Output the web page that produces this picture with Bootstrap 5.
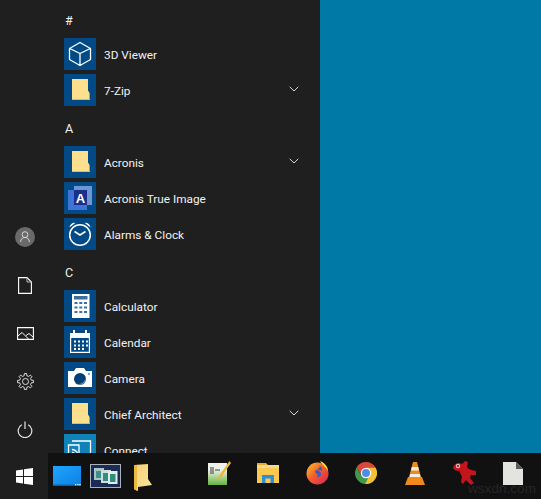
<!DOCTYPE html>
<html lang="en">
<head>
    <meta charset="UTF-8">
    <meta name="viewport" content="width=device-width, initial-scale=1.0">
    <title>Start Menu</title>
    <link href="https://cdn.jsdelivr.net/npm/bootstrap@5.3.0/dist/css/bootstrap.min.css" rel="stylesheet">
    <style>
        html, body { height: 100%; overflow: hidden; }
        body { background: #0179a6; color: #f2f2f2; font-family: Roboto, "Open Sans", sans-serif; font-size: 11.8px; line-height: 16px; }
        .screen { width: 541px; height: 499px; }
        .workspace { height: 453px; }
        .start-menu { width: 320px; background: #1f1f1f; }
        .side-rail { width: 48px; }
        .side-item { width: 48px; height: 48px; padding-left: 2px; }
        .app-list { width: 272px; padding-left: 16px; overflow: hidden; }
        .group-head { height: 36px; flex-shrink: 0; padding: 13px 0 0 1px; font-size: 12.5px; }
        .app-row { height: 36px; flex-shrink: 0; }
        .tile { width: 32px; height: 32px; background: #014a86; flex-shrink: 0; }
        .tile-light { background: #0f83b8; }
        .app-name { margin-left: 8px; padding-top: 2px; flex-grow: 1; }
        .chevron { margin-right: 21px; margin-top: -2px; }
        .taskbar { height: 46px; background: #111111; }
        .start-btn { width: 48px; height: 46px; background: #1f1f1f; }
        .slot-small { width: 38px; }
        .slot-low { padding-top: 3px; }
        .slot { width: 49px; padding-bottom: 6px; }
        .pinned { margin-left: 32.5px; }
        .watermark { position: absolute; left: 468px; top: 481px; color: #262626; font-family: "Liberation Sans", sans-serif; font-size: 13.6px; line-height: 16px; }
    </style>
</head>
<body>
    <svg width="0" height="0" class="position-absolute">
        <symbol id="folder" viewBox="0 0 32 32">
            <path d="M8 5H24V16.500L25.600 19V26H8Z" fill="#fde08e"/>
            <path d="M8 25H25.600V26H8Z" fill="#e3bb57"/>
        </symbol>
        <symbol id="chev" viewBox="0 0 10 6">
            <path d="M.7.8 5 5 9.300.8" fill="none" stroke="#d8d8d8" stroke-width="1"/>
        </symbol>
    </svg>

    <div class="screen d-flex flex-column position-relative">
        <div class="workspace d-flex">
            <div class="start-menu d-flex">
                <!-- left rail -->
                <div class="side-rail d-flex flex-column justify-content-end">
                    <div class="side-item d-flex align-items-center justify-content-center">
                        <svg width="20" height="20" viewBox="0 0 20 20">
                            <circle cx="10" cy="10" r="10" fill="#6a6a6a"/>
                            <circle cx="10" cy="7.600" r="2.900" fill="none" stroke="#d6d6d6" stroke-width="1"/>
                            <path d="M5.600 15c0-3 2-4.500 4.400-4.500s4.400 1.500 4.400 4.500" fill="none" stroke="#d6d6d6" stroke-width="1"/>
                        </svg>
                    </div>
                    <div class="side-item d-flex align-items-center justify-content-center">
                        <svg width="14" height="17" viewBox="0 0 14 17">
                            <path d="M.6.6H9L13.400 5V16.400H.6Z" fill="none" stroke="#fff" stroke-width="1.100"/>
                            <path d="M9 .6V5H13.400" fill="none" stroke="#bbb" stroke-width="1"/>
                        </svg>
                    </div>
                    <div class="side-item d-flex align-items-center justify-content-center">
                        <svg width="17" height="13" viewBox="0 0 17 13">
                            <path d="M.6.6H16.400V12.400H.6Z" fill="none" stroke="#fff" stroke-width="1.100"/>
                            <path d="M.8 9 5 5.500 11.500 12M9 8.500 12 6.500 16 10" fill="none" stroke="#fff" stroke-width="1"/>
                        </svg>
                    </div>
                    <div class="side-item d-flex align-items-center justify-content-center">
                        <svg width="17" height="17" viewBox="0 0 18 18">
                            <path d="M15.14 7.58 17.42 7.82V10.18L15.14 10.42 14.34 12.34 15.79 14.12 14.12 15.79 12.34 14.34 10.42 15.14 10.18 17.42H7.82L7.58 15.14 5.66 14.34 3.88 15.79 2.21 14.12 3.66 12.34 2.86 10.42 .58 10.18V7.82L2.86 7.58 3.66 5.66 2.21 3.88 3.88 2.21 5.66 3.66 7.58 2.86 7.82 .58H10.18L10.42 2.86 12.34 3.66 14.12 2.21 15.79 3.88 14.34 5.66Z" fill="none" stroke="#e6e6e6" stroke-width="1"/>
                            <circle cx="9" cy="9" r="3.200" fill="none" stroke="#e6e6e6" stroke-width="1"/>
                        </svg>
                    </div>
                    <div class="side-item d-flex align-items-center justify-content-center">
                        <svg width="16" height="17" viewBox="0 0 16 17">
                            <path d="M4.800 3.800A6.800 6.800 0 1 0 11.200 3.800" fill="none" stroke="#e6e6e6" stroke-width="1.200"/>
                            <path d="M8 .5V8" fill="none" stroke="#e6e6e6" stroke-width="1.200"/>
                        </svg>
                    </div>
                </div>

                <!-- all apps -->
                <div class="app-list d-flex flex-column">
                    <div class="group-head">#</div>
                    <div class="app-row d-flex align-items-center">
                        <div class="tile">
                            <svg width="32" height="32" viewBox="0 0 32 32">
                                <path d="M16 4.500 26.500 10.500V21.500L16 27.500 5.500 21.500V10.500ZM5.800 10.500 16 15.500 26.200 10.500M16 15.500V27.500" fill="none" stroke="#fff" stroke-width="1.300" stroke-linejoin="round"/>
                            </svg>
                        </div>
                        <span class="app-name">3D Viewer</span>
                    </div>
                    <div class="app-row d-flex align-items-center">
                        <div class="tile"><svg width="32" height="32"><use href="#folder"/></svg></div>
                        <span class="app-name">7-Zip</span>
                        <svg class="chevron" width="10" height="6"><use href="#chev"/></svg>
                    </div>

                    <div class="group-head">A</div>
                    <div class="app-row d-flex align-items-center">
                        <div class="tile"><svg width="32" height="32"><use href="#folder"/></svg></div>
                        <span class="app-name">Acronis</span>
                        <svg class="chevron" width="10" height="6"><use href="#chev"/></svg>
                    </div>
                    <div class="app-row d-flex align-items-center">
                        <div class="tile">
                            <svg width="32" height="32" viewBox="0 0 32 32">
                                <rect x="10" y="4" width="18" height="19" fill="#6c97d2"/>
                                <rect x="4" y="8" width="19" height="20" fill="#3f74d6"/>
                                <rect x="10" y="8" width="13" height="15" fill="#1b2f8c"/>
                                <text x="16.500" y="20.500" text-anchor="middle" fill="#fff" font-family="Liberation Sans, sans-serif" font-weight="700" font-size="13">A</text>
                            </svg>
                        </div>
                        <span class="app-name">Acronis True Image</span>
                    </div>
                    <div class="app-row d-flex align-items-center">
                        <div class="tile">
                            <svg width="32" height="32" viewBox="0 0 32 32">
                                <circle cx="16" cy="17" r="10.300" fill="none" stroke="#fff" stroke-width="1.500"/>
                                <path d="M5.500 9.500C6 6 8.500 4.500 11.500 4.800ZM26.500 9.500C26 6 23.500 4.500 20.500 4.800Z" fill="#fff"/>
                                <path d="M10.500 13.500 16 17 21.500 13.500" fill="none" stroke="#fff" stroke-width="1.500"/>
                            </svg>
                        </div>
                        <span class="app-name">Alarms &amp; Clock</span>
                    </div>

                    <div class="group-head">C</div>
                    <div class="app-row d-flex align-items-center">
                        <div class="tile">
                            <svg width="32" height="32" viewBox="0 0 32 32">
                                <rect x="8" y="4" width="17.500" height="24" fill="#fff"/>
                                <rect x="10" y="6" width="13.500" height="3.500" fill="#3e6f9f"/>
                                <path d="M10.500 12h3v2h-3zM15.300 12h3v2h-3zM20 12h3v2h-3zM10.500 16.500h3v2h-3zM15.300 16.500h3v2h-3zM20 16.500h3v2h-3zM10.500 21h3v2h-3zM15.300 21h3v2h-3zM20 21h3v2h-3z" fill="#3e6f9f"/>
                            </svg>
                        </div>
                        <span class="app-name">Calculator</span>
                    </div>
                    <div class="app-row d-flex align-items-center">
                        <div class="tile">
                            <svg width="32" height="32" viewBox="0 0 32 32">
                                <path d="M6 7H9V4H11V7H21V4H23V7H26V12H6Z" fill="#fff"/>
                                <path d="M6.600 10V26.400H25.400V10" fill="none" stroke="#fff" stroke-width="1.200"/>
                                <path d="M10 14.500h2v2h-2zM14 14.500h2v2h-2zM18 14.500h2v2h-2zM22 14.500h2v2h-2zM10 18.500h2v2h-2zM14 18.500h2v2h-2zM18 18.500h2v2h-2zM22 18.500h2v2h-2zM10 22h2v2h-2zM14 22h2v2h-2zM18 22h2v2h-2z" fill="#fff"/>
                            </svg>
                        </div>
                        <span class="app-name">Calendar</span>
                    </div>
                    <div class="app-row d-flex align-items-center">
                        <div class="tile">
                            <svg width="32" height="32" viewBox="0 0 32 32">
                                <path d="M4 9H10L12 6H20L22 9H28V25H4Z" fill="#fff"/>
                                <circle cx="16" cy="17" r="6" fill="#013f75"/>
                                <path d="M21.500 15A6 6 0 0 1 12 21.500 7 7 0 0 0 21.500 15Z" fill="#6f8fb0"/>
                                <circle cx="25" cy="12" r=".8" fill="#013f75"/>
                            </svg>
                        </div>
                        <span class="app-name">Camera</span>
                    </div>
                    <div class="app-row d-flex align-items-center">
                        <div class="tile"><svg width="32" height="32"><use href="#folder"/></svg></div>
                        <span class="app-name">Chief Architect</span>
                        <svg class="chevron" width="10" height="6"><use href="#chev"/></svg>
                    </div>
                    <div class="app-row d-flex align-items-center">
                        <div class="tile tile-light">
                            <svg width="32" height="32" viewBox="0 0 32 32">
                                <path d="M8 7H26.500V24H8M4.500 11H15V24H4.500Z" fill="none" stroke="#fff" stroke-width="1.300"/>
                                <path d="M8 15.500A6 6 0 0 1 14 21.500M8 18.500A3 3 0 0 1 11 21.500" fill="none" stroke="#fff" stroke-width="1.300"/>
                            </svg>
                        </div>
                        <span class="app-name">Connect</span>
                    </div>
                </div>
            </div>
            <div class="flex-grow-1"></div>
        </div>

        <!-- taskbar -->
        <div class="taskbar d-flex">
            <div class="start-btn d-flex align-items-center justify-content-center">
                <svg width="17" height="17" viewBox="0 0 17 17">
                    <path d="M0 2.500 7 1.500V8H0ZM8 1.300 17 0V8H8ZM0 9H7V15.500L0 14.500ZM8 9H17V17L8 15.700Z" fill="#fff"/>
                </svg>
            </div>
            <div class="slot-small d-flex align-items-center justify-content-center">
                <svg width="28" height="20" viewBox="0 0 28 20">
                    <defs>
                        <linearGradient id="desk" x1="0" y1="0" x2="1" y2="1">
                            <stop offset="0" stop-color="#1fa5ff"/>
                            <stop offset="1" stop-color="#0d80e0"/>
                        </linearGradient>
                    </defs>
                    <rect width="28" height="20" fill="url(#desk)"/>
                    <path d="M0 18.500H28V20H0Z" fill="#0a62b4"/>
                    <path d="M22 18h1.300v1.300H22zM24.300 18h1.300v1.300h-1.300zM26.300 18h1.300v1.300h-1.300z" fill="#fff"/>
                </svg>
            </div>
            <div class="slot-small d-flex align-items-center justify-content-center">
                <svg width="31" height="24" viewBox="0 0 31 24">
                    <rect x=".5" y=".5" width="30" height="23" fill="#1c2b55" stroke="#a9b1bd"/>
                    <rect x="4" y="4" width="10" height="12" fill="#a9c4c4"/>
                    <rect x="6" y="7" width="6" height="7" fill="#3f8f87"/>
                    <rect x="11" y="6" width="10" height="13" fill="#cfdedc"/>
                    <rect x="13" y="9" width="6" height="8" fill="#2f8f85"/>
                    <rect x="18" y="7" width="9.500" height="13" fill="#e4ecea"/>
                    <rect x="20" y="10" width="5.500" height="8" fill="#2d8f7a"/>
                </svg>
            </div>
            <div class="slot-small slot-low d-flex align-items-center justify-content-center">
                <svg width="18" height="27" viewBox="0 0 18 27">
                    <defs>
                        <linearGradient id="tall" x1="0" y1="0" x2="1" y2="1">
                            <stop offset="0" stop-color="#f3cf72"/>
                            <stop offset="1" stop-color="#fde7a4"/>
                        </linearGradient>
                    </defs>
                    <path d="M0 1 14 0V15L18 21 4 23V27L0 25Z" fill="url(#tall)"/>
                    <path d="M0 1 3 1V27L0 25Z" fill="#e9b83f"/>
                </svg>
            </div>
            <div class="pinned d-flex">
                <div class="slot d-flex align-items-center justify-content-center">
                    <svg width="23" height="24" viewBox="0 0 23 24">
                        <defs>
                            <linearGradient id="note" x1="0" y1="0" x2="0" y2="1">
                                <stop offset=".3" stop-color="#eef2e8"/>
                                <stop offset="1" stop-color="#66b23f"/>
                            </linearGradient>
                        </defs>
                        <rect x="0" y="2" width="19" height="22" fill="url(#note)"/>
                        <path d="M3 6V13M5 6V13M7 9H12" stroke="#3a3a3a" stroke-width="1"/>
                        <path d="M21.500 0 11 15 9.500 19 12.500 17 23 2Z" fill="#e8b93a"/>
                    </svg>
                </div>
                <div class="slot d-flex align-items-center justify-content-center">
                    <svg width="22" height="20" viewBox="0 0 22 20">
                        <path d="M0 0H9L11 2H0Z" fill="#e9ad2d"/>
                        <rect y="2" width="22" height="18" fill="#fbc94f"/>
                        <rect y="2" width="22" height="3" fill="#f6d98a"/>
                        <path d="M5 20V12H17V20H13.500V15.500H8.500V20Z" fill="#2f8fd6"/>
                    </svg>
                </div>
                <div class="slot d-flex align-items-center justify-content-center">
                    <svg width="23" height="24" viewBox="0 0 23 24">
                        <defs>
                            <linearGradient id="fox" x1="0" y1="0" x2="1" y2="1">
                                <stop offset="0" stop-color="#ffcb2f"/>
                                <stop offset=".45" stop-color="#f5602a"/>
                                <stop offset="1" stop-color="#d81f5c"/>
                            </linearGradient>
                        </defs>
                        <circle cx="11.500" cy="12.500" r="11" fill="url(#fox)"/>
                        <path d="M14 5C16 6.500 16.500 8 16 10 14.500 9 13 8.800 11.500 9.300 13 10 15.500 11 15 14 14 16 12 16.500 10.500 15.500 12.500 15 12 13 10.500 12.500 9 12 8.500 10.500 9.500 9.500 11.500 9 13.500 7.500 14 5Z" fill="#3a5cc0"/>
                        <path d="M14 0C19 2 22 6 22 10 20 6 17 5 14 0Z" fill="#ffd93b"/>
                    </svg>
                </div>
                <div class="slot d-flex align-items-center justify-content-center">
                    <svg width="22" height="22" viewBox="0 0 22 22">
                        <path d="M11 0A11 11 0 0 1 20.500 5.500H11Z" fill="#d8473a"/>
                        <path d="M11 0A11 11 0 0 0 1.500 5.500L6 13 11 5.500Z" fill="#d8473a"/>
                        <path d="M1.500 5.500A11 11 0 0 0 10 22L15 13H6Z" fill="#3f9b4c"/>
                        <path d="M20.500 5.500A11 11 0 0 1 10 22L15.500 11 11 5.500Z" fill="#f2c233"/>
                        <circle cx="11" cy="11" r="5.200" fill="#fff"/>
                        <circle cx="11" cy="11" r="4" fill="#4f8ce8"/>
                    </svg>
                </div>
                <div class="slot d-flex align-items-center justify-content-center">
                    <svg width="20" height="23" viewBox="0 0 20 23">
                        <path d="M8 0H12L16 15H4Z" fill="#f08a1c"/>
                        <path d="M6.800 5H13.200L14 8.500H6Z" fill="#f4f0e6"/>
                        <path d="M5.300 12H14.700L15.500 15H4.500Z" fill="#f4f0e6"/>
                        <path d="M3 15H17L20 23H0Z" fill="#f08a1c"/>
                    </svg>
                </div>
                <div class="slot d-flex align-items-center justify-content-center">
                    <svg width="23" height="24" viewBox="0 0 23 24">
                        <path d="M0 7C1 2 6 1 9 3L12 0 15 1 14 6C15 8 18 9 23 10V14H18L17 17 21 22 18 24 13 19 10 23 8 21 9 15C7 13 7 10 6 10 3 10 1 9 0 7Z" fill="#c4141c"/>
                        <circle cx="5" cy="5" r="2.200" fill="#e8b9b9"/>
                        <circle cx="5" cy="5" r="1" fill="#5a1a1a"/>
                    </svg>
                </div>
                <div class="slot d-flex align-items-center justify-content-center">
                    <svg width="20" height="23" viewBox="0 0 20 23">
                        <path d="M0 0H13L20 7V23H0Z" fill="#e3e3e0"/>
                        <path d="M13 0 20 7H13Z" fill="#5c5c5c"/>
                    </svg>
                </div>
            </div>
        </div>

        <span class="watermark">wsxdn.com</span>
    </div>

    <script src="https://cdn.jsdelivr.net/npm/bootstrap@5.3.0/dist/js/bootstrap.bundle.min.js"></script>
</body>
</html>
